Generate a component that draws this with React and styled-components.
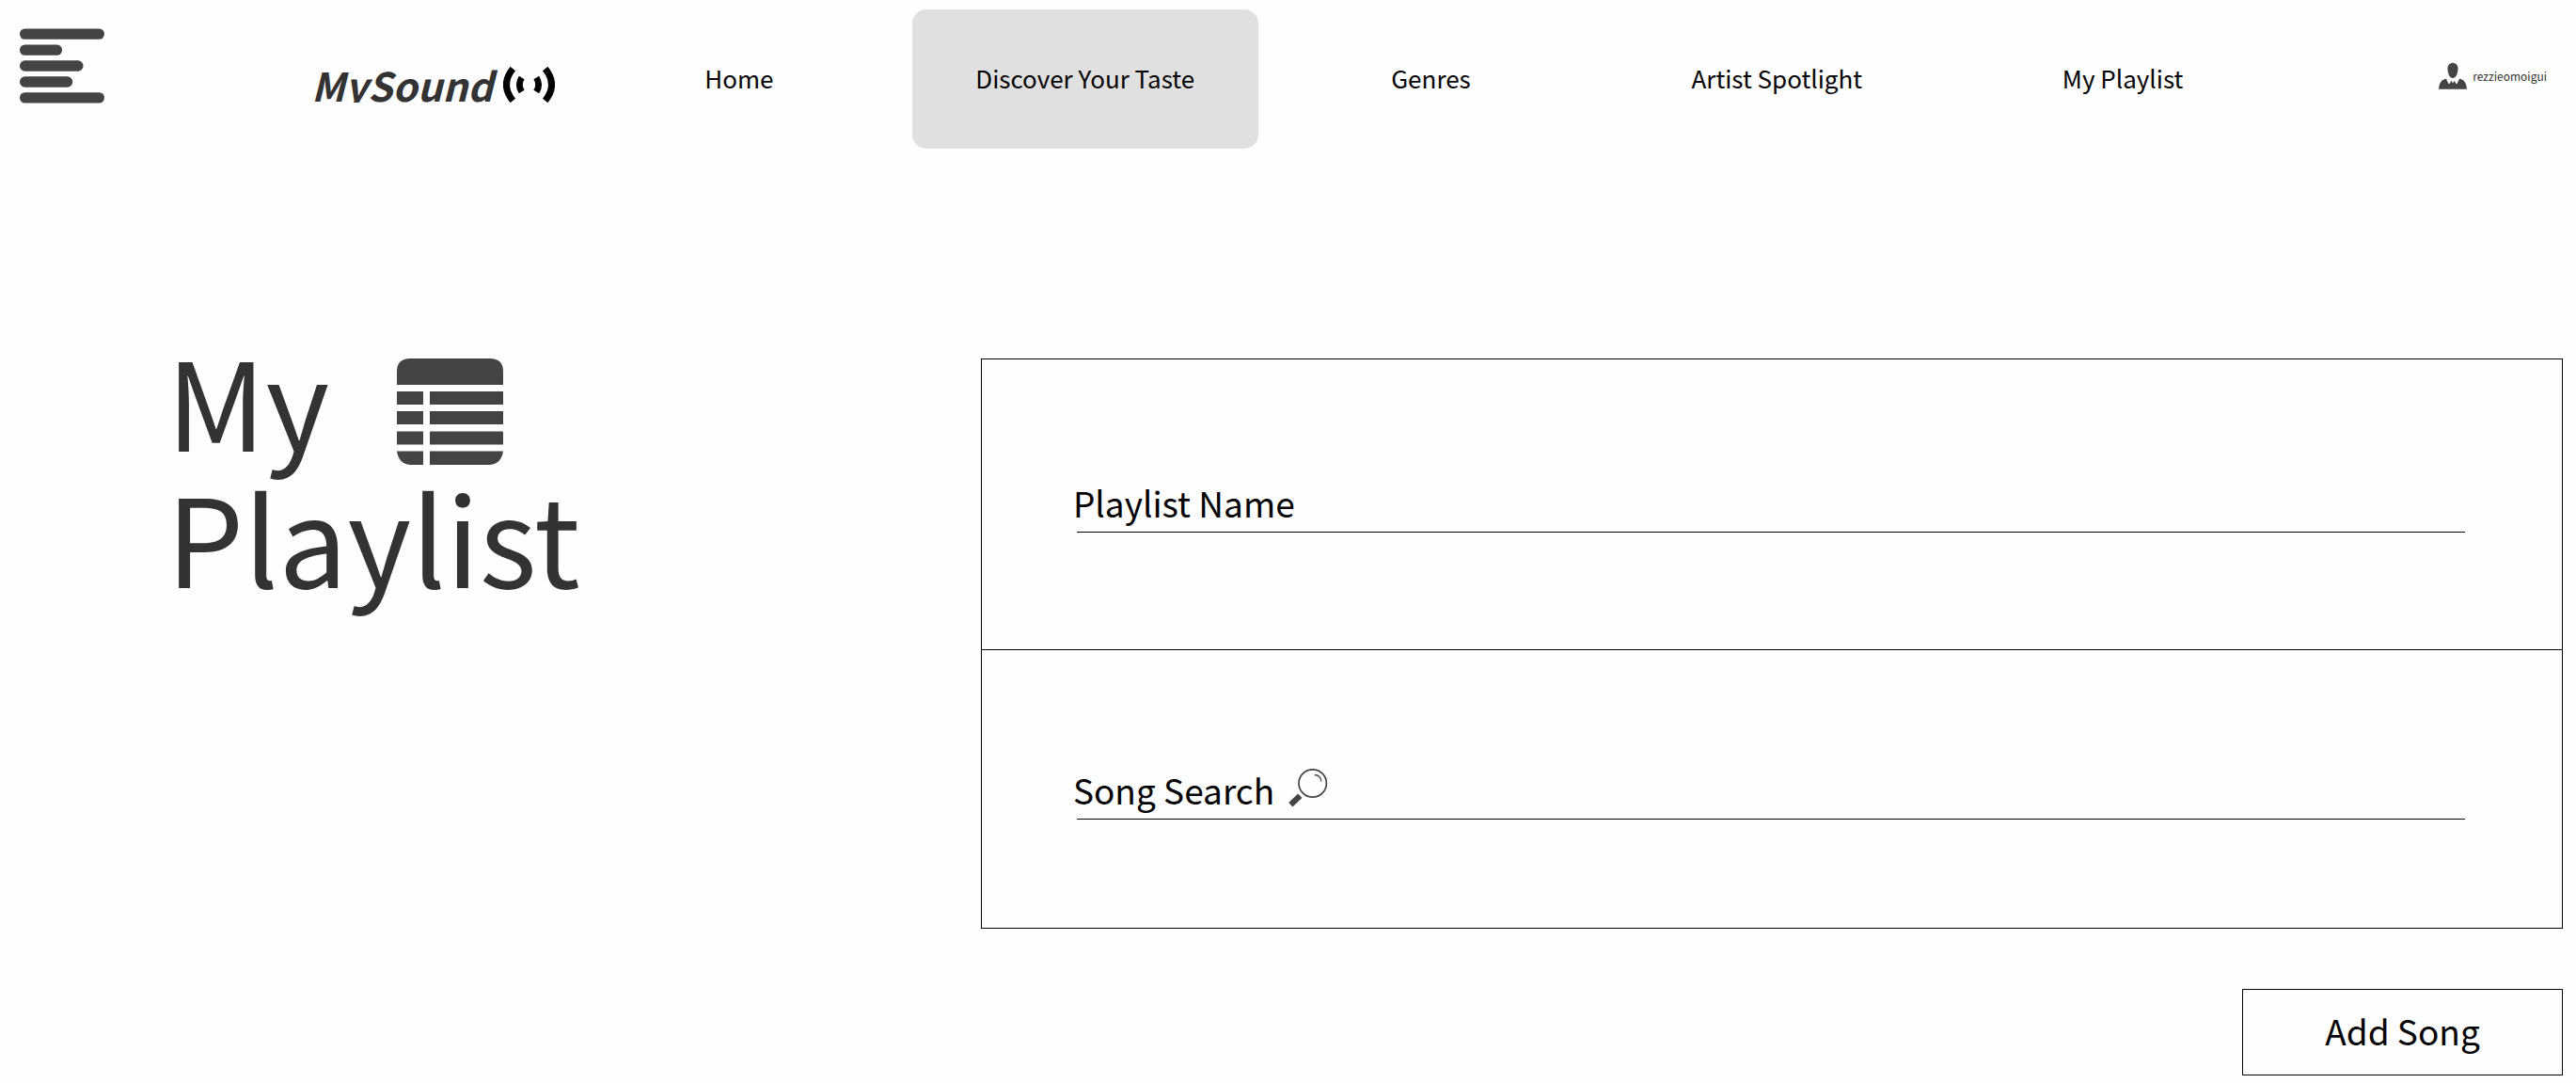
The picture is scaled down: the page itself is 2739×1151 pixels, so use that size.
import React from "react";
import styled, { createGlobalStyle } from "styled-components";

const GlobalStyle = createGlobalStyle`
  *, *::before, *::after { box-sizing: border-box; }
  body {
    margin: 0;
    background: #fefefe;
    color: #000;
    font-family: "Noto Sans CJK SC", "Noto Sans", sans-serif;
  }
  h1 { margin: 0; }
`;

const Header = styled.header`
  display: flex;
  align-items: flex-start;
  padding-top: 10px;
`;

const HeaderStart = styled.div`
  flex: none;
  width: 602px;
  display: flex;
  align-items: flex-start;
  gap: 220px;
  padding: 20px 0 0 21px;
`;

const MenuButton = styled.button`
  display: block;
  padding: 0;
  border: 0;
  background: none;
  cursor: pointer;
  svg { display: block; }
`;

const Brand = styled.a`
  display: flex;
  align-items: flex-end;
  gap: 3px;
  padding-top: 35px;
  color: #333;
  text-decoration: none;
  svg { display: block; }
`;

const BrandName = styled.span`
  height: 44px;
  padding-right: 8px;
  overflow: hidden;
  font-size: 42px;
  line-height: 50px;
  font-weight: 700;
  font-style: italic;
`;

const Nav = styled.nav`
  flex: 1;
  display: grid;
  grid-template-columns: repeat(5, 1fr);
`;

const NavLink = styled.a`
  display: flex;
  align-items: center;
  justify-content: center;
  height: 148px;
  padding-bottom: 2px;
  border-radius: 15px;
  background: ${(p) => (p.$active ? "#e0e0e0" : "transparent")};
  color: #000;
  font-size: 26px;
  line-height: 36px;
  text-decoration: none;
  white-space: nowrap;
`;

const Account = styled.a`
  flex: none;
  width: 298px;
  height: 142px;
  display: flex;
  align-items: center;
  justify-content: flex-end;
  gap: 6px;
  padding-right: 31px;
  color: #333;
  font-size: 12px;
  line-height: 20px;
  text-decoration: none;
`;

const Main = styled.main`
  display: grid;
  grid-template-columns: 31fr 50fr;
  padding: 193px 14px 8px 0;
`;

const Title = styled.h1`
  padding-left: 177px;
  color: #333;
  font-size: 130px;
  line-height: 145px;
  font-weight: 400;
`;

const TitleLine = styled.span`
  display: flex;
  align-items: flex-start;
  gap: 72px;
  svg { display: block; margin-top: 30px; }
`;

const Form = styled.form`
  display: flex;
  flex-direction: column;
  padding-top: 30px;
`;

const Panel = styled.div`
  padding: ${(p) => p.$pad};
  border: 1px solid #000;
  & + & { margin-top: -1px; }
`;

const Field = styled.div`
  display: flex;
  flex-wrap: wrap;
  align-items: flex-start;
  &::after {
    content: "";
    flex: 0 0 100%;
    height: 1px;
    border-left: 4px solid #fefefe;
    background: #000;
  }
`;

const Label = styled.label`
  display: flex;
  align-items: flex-start;
  gap: 15px;
  height: 56px;
  font-size: 37px;
  line-height: 50px;
  svg { display: block; margin-top: 3px; }
`;

const TextInput = styled.input`
  flex: 1;
  min-width: 0;
  height: 56px;
  padding: 0 0 6px 16px;
  border: 0;
  outline: 0;
  background: transparent;
  font: inherit;
  font-size: 37px;
  line-height: 50px;
`;

const AddButton = styled.button`
  align-self: flex-end;
  width: 341px;
  margin-top: 64px;
  padding: 18px 16px 22px;
  border: 1px solid #000;
  background: transparent;
  color: #000;
  font-family: inherit;
  font-size: 37px;
  line-height: 50px;
  cursor: pointer;
`;

const MenuIcon = () => (
  <svg width="90" height="80" viewBox="0 0 90 80" fill="#444" aria-hidden="true">
    <rect y="0.4" width="90" height="11.4" rx="5.5" />
    <rect y="17.4" width="45" height="11.4" rx="5.5" />
    <rect y="34.3" width="67.5" height="11.4" rx="5.5" />
    <rect y="51.3" width="56.2" height="11.4" rx="5.5" />
    <rect y="68.2" width="90" height="11.4" rx="5.5" />
  </svg>
);

const WaveIcon = () => (
  <svg width="55" height="38" viewBox="0 0 55 38" fill="none" stroke="#000" aria-hidden="true">
    <path d="M10.3 2 Q-3.4 19 10.3 36" strokeWidth="7" />
    <path d="M19.7 11.5 Q15 19 19.7 26.5" strokeWidth="6.8" />
    <path d="M35.3 11.5 Q40 19 35.3 26.5" strokeWidth="6.8" />
    <path d="M44.7 2 Q58.4 19 44.7 36" strokeWidth="7" />
  </svg>
);

const UserIcon = () => (
  <svg width="30" height="28" viewBox="0 0 30 28" fill="#444" aria-hidden="true">
    <path d="M15 0c3.7 0 5.7 2.6 5.500 6.500C20.300 11.500 18.200 16 15 16S9.700 11.500 9.500 6.500C9.300 2.600 11.300 0 15 0z" />
    <path d="M8 16.700C9 18.500 9.600 20.500 10.800 22.300C11.700 22.300 12.400 20.300 13.300 18.700L15 21.500L16.700 18.700C17.600 20.300 18.300 22.300 19.200 22.300C20.400 20.500 21 18.500 22 16.700C26.500 17.200 29.300 20.500 30 27.800H0C.7 20.500 3.500 17.200 8 16.700z" />
  </svg>
);

const TableIcon = () => (
  <svg width="113" height="113" viewBox="0 0 113 113" fill="#444" aria-hidden="true">
    <path d="M0 28V14Q0 0 14 0H99Q113 0 113 14V28z" />
    <path d="M0 35h28v14H0zM35 35h78v14H35zM0 56h28v14H0zM35 56h78v14H35zM0 77.500h28v14H0zM35 77.500h78v14H35z" />
    <path d="M0 98.500h28V113H14Q2 112 0 98.500zM35 98.500h78Q111 112 99 113H35z" />
  </svg>
);

const SearchIcon = () => (
  <svg width="42" height="41" viewBox="0 0 42 41" fill="none" stroke="#444" aria-hidden="true">
    <circle cx="25.700" cy="15.500" r="14.700" strokeWidth="1.700" />
    <path d="M27.700 6.500Q34.300 6.500 34.800 13.500" strokeWidth="1.300" />
    <path d="M2.300 38.300L12.300 28.800" strokeWidth="6.200" />
  </svg>
);

const links = ["Home", "Discover Your Taste", "Genres", "Artist Spotlight", "My Playlist"];

export default function App() {
  return (
    <>
      <GlobalStyle />
      <Header>
        <HeaderStart>
          <MenuButton type="button" aria-label="Menu">
            <MenuIcon />
          </MenuButton>
          <Brand href="#">
            <BrandName>MySound</BrandName>
            <WaveIcon />
          </Brand>
        </HeaderStart>
        <Nav>
          {links.map((name) => (
            <NavLink key={name} href="#" $active={name === "Discover Your Taste"}>
              {name}
            </NavLink>
          ))}
        </Nav>
        <Account href="#">
          <UserIcon />
          rezzieomoigui
        </Account>
      </Header>
      <Main>
        <Title>
          <TitleLine>
            My <TableIcon />
          </TitleLine>
          <TitleLine>Playlist</TitleLine>
        </Title>
        <Form onSubmit={(e) => e.preventDefault()}>
          <Panel $pad="127px 103px 124px 97px">
            <Field>
              <Label htmlFor="playlist-name">Playlist Name</Label>
              <TextInput id="playlist-name" type="text" />
            </Field>
          </Panel>
          <Panel $pad="123px 103px 115px 97px">
            <Field>
              <Label htmlFor="song-search">
                Song Search <SearchIcon />
              </Label>
              <TextInput id="song-search" type="search" />
            </Field>
          </Panel>
          <AddButton type="submit">Add Song</AddButton>
        </Form>
      </Main>
    </>
  );
}
